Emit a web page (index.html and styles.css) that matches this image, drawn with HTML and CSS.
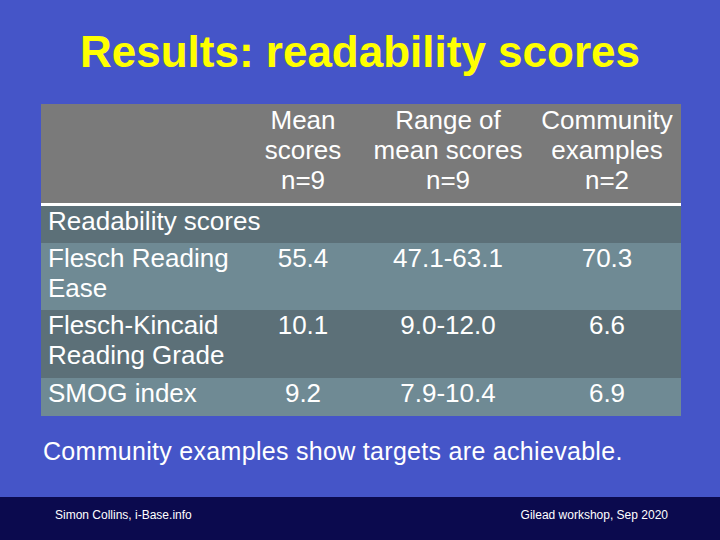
FILE: index.html
```html
<!DOCTYPE html>
<html>
<head>
<meta charset="utf-8">
<link rel="stylesheet" href="styles.css">
</head>
<body>
<div class="slide">
  <h1 class="title">Results: readability scores</h1>
  <table class="scores">
    <colgroup>
      <col class="c1"><col class="c2"><col class="c3"><col class="c4">
    </colgroup>
    <thead>
      <tr class="head">
        <th></th>
        <th>Mean<br>scores<br>n=9</th>
        <th>Range of<br>mean scores<br>n=9</th>
        <th>Community<br>examples<br>n=2</th>
      </tr>
    </thead>
    <tbody>
      <tr class="section">
        <td colspan="4">Readability scores</td>
      </tr>
      <tr class="light r1">
        <td>Flesch Reading<br>Ease</td>
        <td class="num">55.4</td>
        <td class="num">47.1-63.1</td>
        <td class="num">70.3</td>
      </tr>
      <tr class="dark r2">
        <td>Flesch-Kincaid<br>Reading Grade</td>
        <td class="num">10.1</td>
        <td class="num">9.0-12.0</td>
        <td class="num">6.6</td>
      </tr>
      <tr class="light r3">
        <td>SMOG index</td>
        <td class="num">9.2</td>
        <td class="num">7.9-10.4</td>
        <td class="num">6.9</td>
      </tr>
    </tbody>
  </table>
  <p class="note">Community examples show targets are achievable.</p>
  <div class="footer">
    <span>Simon Collins, i-Base.info</span>
    <span>Gilead workshop, Sep 2020</span>
  </div>
</div>
</body>
</html>
```
FILE: styles.css
```css
html, body {
  margin: 0;
  padding: 0;
}
body {
  width: 720px;
  height: 540px;
  overflow: hidden;
  background: #4555c8;
  font-family: "Liberation Sans", Arial, sans-serif;
}
.slide {
  width: 720px;
  height: 540px;
  display: flex;
  flex-direction: column;
}
.title {
  margin: 0;
  padding-top: 26px;
  height: 104px;
  box-sizing: border-box;
  text-align: center;
  color: #ffff00;
  font-size: 44px;
  line-height: 52px;
  font-weight: bold;
}
.scores {
  margin-left: 41px;
  width: 640px;
  border-collapse: collapse;
  table-layout: fixed;
  color: #ffffff;
  font-size: 26px;
  line-height: 30px;
}
.c1 { width: 202px; }
.c2 { width: 120px; }
.c3 { width: 170px; }
.c4 { width: 148px; }
.scores th, .scores td {
  padding: 0 7px 7px 7px;
  vertical-align: top;
}
.scores th {
  font-weight: normal;
  text-align: center;
  padding: 1px 0 8px 0;
}
.head {
  background: #7a7a7a;
  border-bottom: 3px solid #ffffff;
}
.section { background: #5c7078; height: 36px; }
.scores .section td { padding-top: 0; }
.light { background: #6f8a94; }
.dark { background: #5c7078; }
.r1 { height: 66px; }
.r2 { height: 68px; }
.r3 { height: 38px; }
.scores td.num {
  text-align: center;
  padding-left: 0;
  padding-right: 0;
}
.note {
  margin: 0;
  padding: 20px 0 0 43px;
  color: #ffffff;
  font-size: 25px;
  line-height: 30px;
  letter-spacing: 0.3px;
  flex: 1;
}
.footer {
  height: 43px;
  background: #0b0a4e;
  color: #ffffff;
  font-size: 12px;
  display: flex;
  justify-content: space-between;
  align-items: flex-start;
  padding: 11px 52px 0 55px;
  box-sizing: border-box;
}
```
